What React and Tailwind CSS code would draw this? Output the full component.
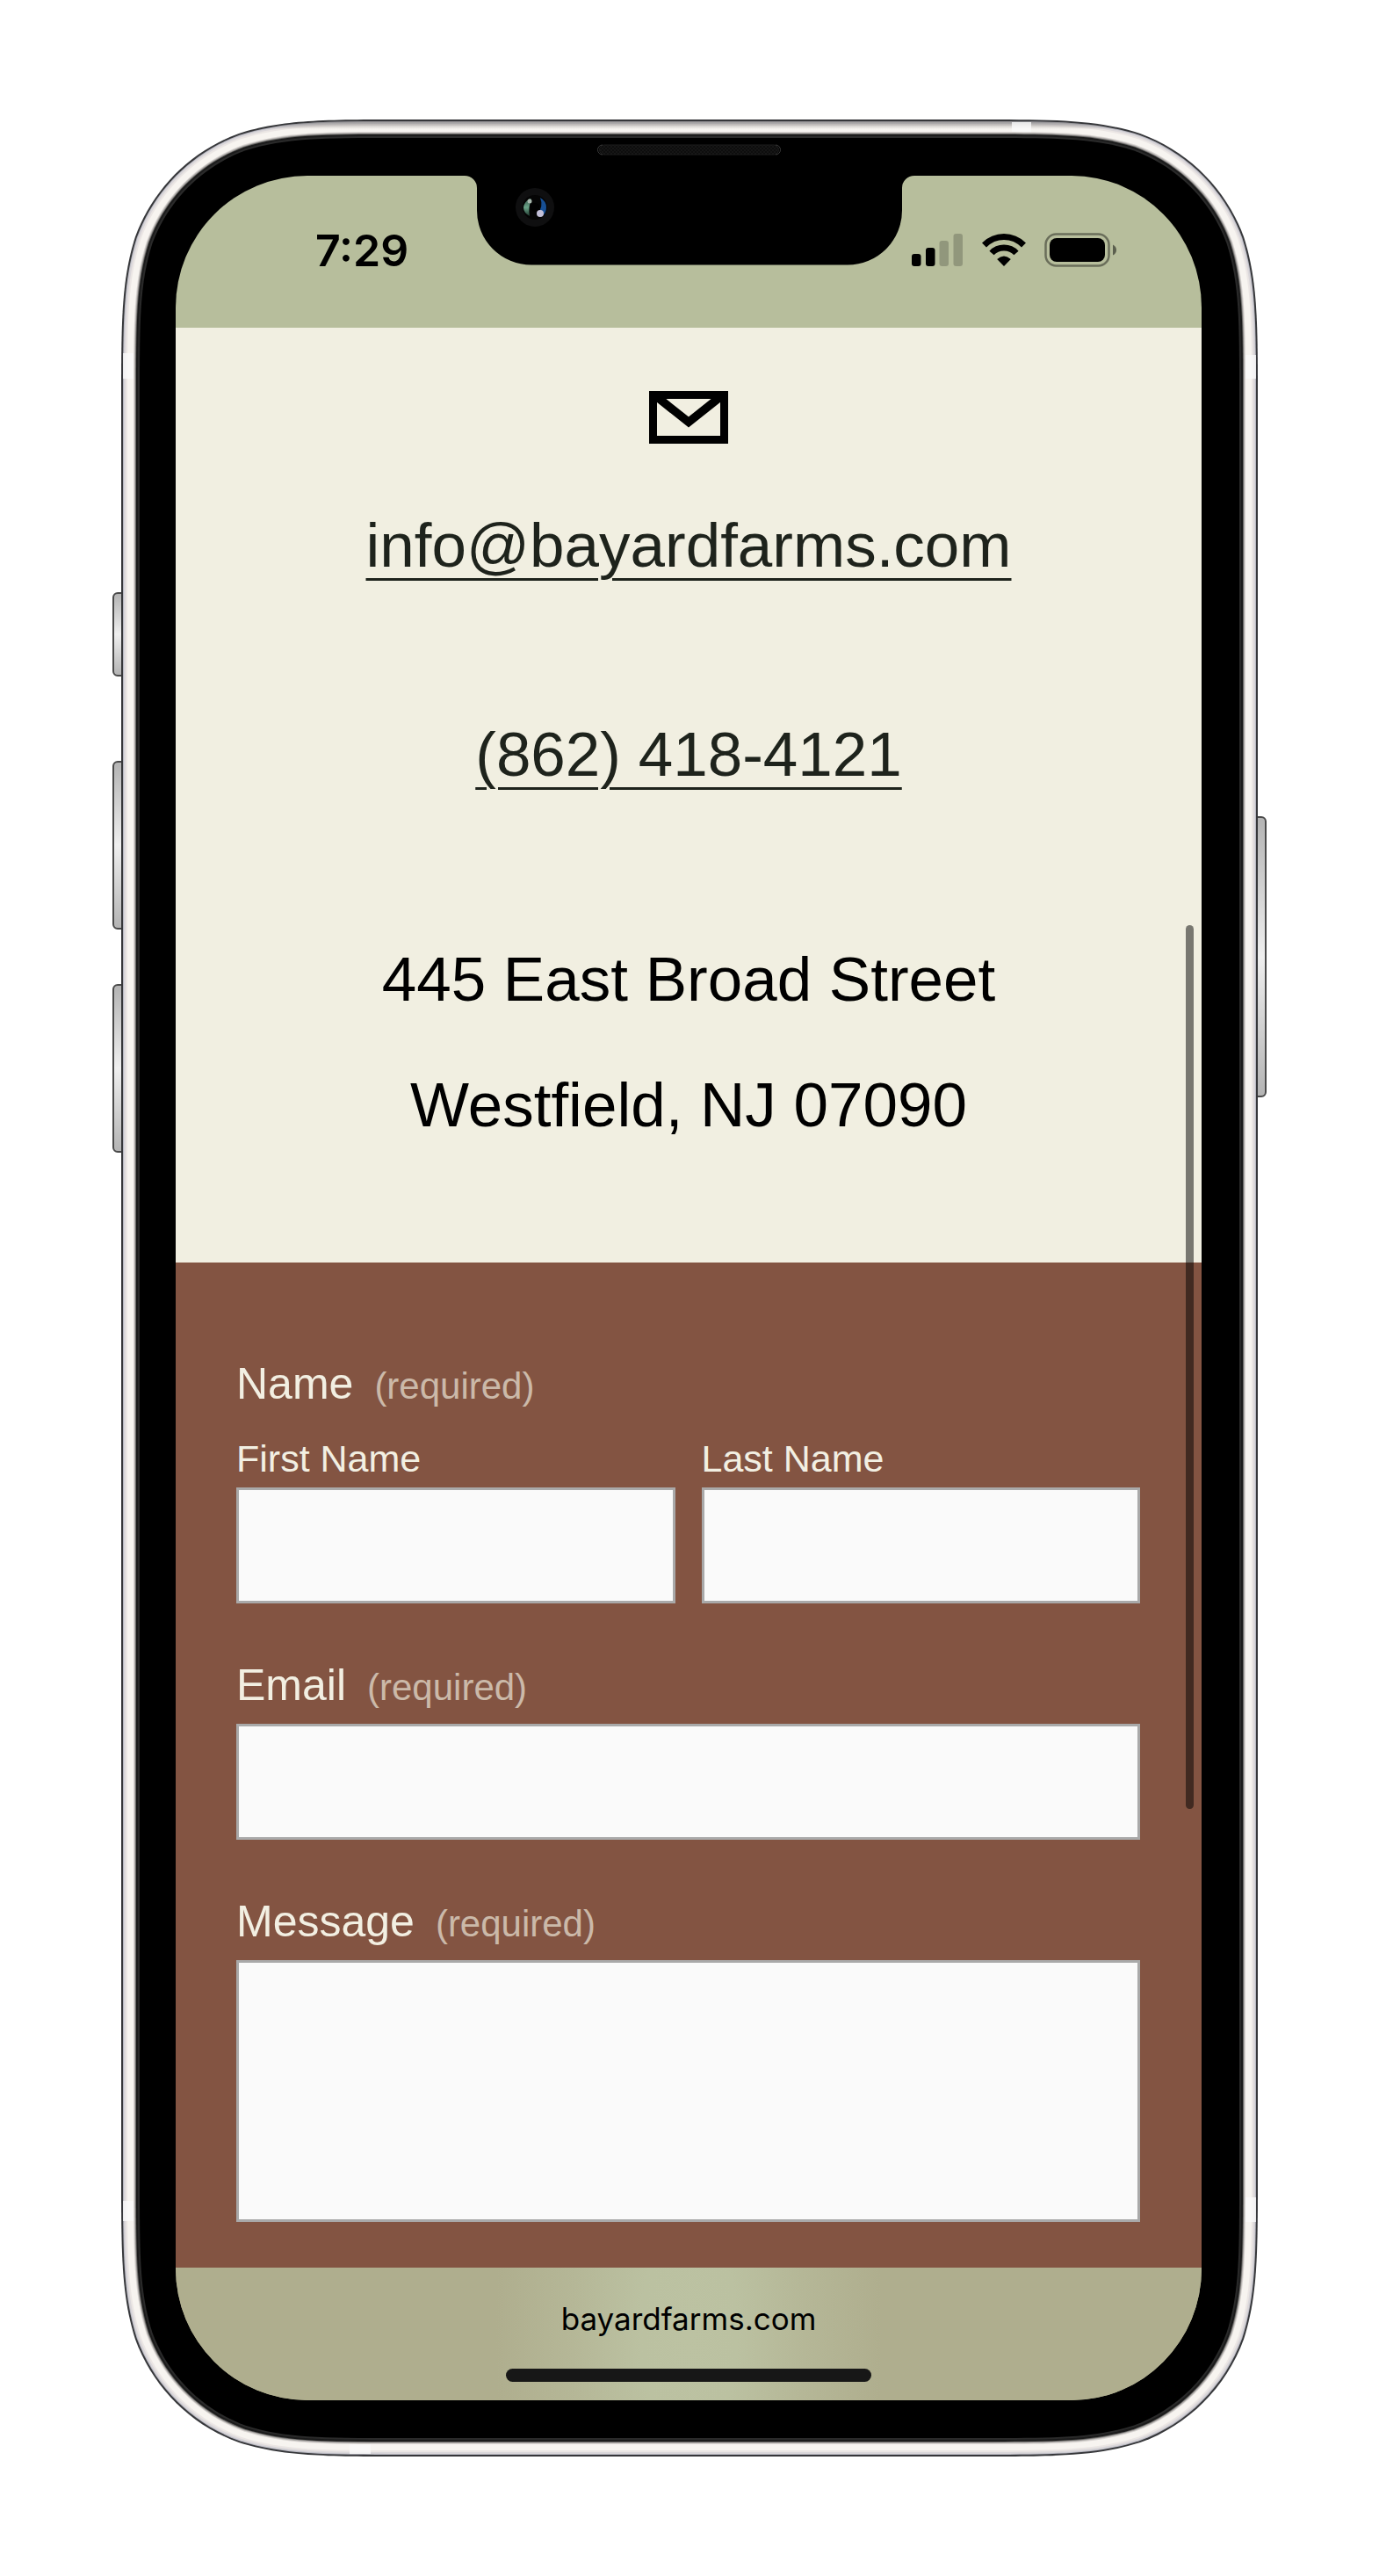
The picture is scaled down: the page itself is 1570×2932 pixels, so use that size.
import React from "react";

/* Continuous-curvature rounded rectangle, as used on phone bodies. */
function bodyPath(x, y, w, h, r) {
  const a = 1.52866483 * r;
  const b = 1.08849296 * r;
  const c = 0.86840694 * r;
  const d = 0.63149379 * r;
  const e = 0.37282383 * r;
  const f = 0.16905956 * r;
  const g = 0.07491139 * r;
  const R = x + w;
  const B = y + h;
  return [
    `M${x + a} ${y}H${R - a}`,
    `C${R - b} ${y} ${R - c} ${y} ${R - d} ${y + g}`,
    `C${R - e} ${y + f} ${R - f} ${y + e} ${R - g} ${y + d}`,
    `C${R} ${y + c} ${R} ${y + b} ${R} ${y + a}`,
    `V${B - a}`,
    `C${R} ${B - b} ${R} ${B - c} ${R - g} ${B - d}`,
    `C${R - f} ${B - e} ${R - e} ${B - f} ${R - d} ${B - g}`,
    `C${R - c} ${B} ${R - b} ${B} ${R - a} ${B}`,
    `H${x + a}`,
    `C${x + b} ${B} ${x + c} ${B} ${x + d} ${B - g}`,
    `C${x + e} ${B - f} ${x + f} ${B - e} ${x + g} ${B - d}`,
    `C${x} ${B - c} ${x} ${B - b} ${x} ${B - a}`,
    `V${y + a}`,
    `C${x} ${y + b} ${x} ${y + c} ${x + g} ${y + d}`,
    `C${x + f} ${y + e} ${x + e} ${y + f} ${x + d} ${y + g}`,
    `C${x + c} ${y} ${x + b} ${y} ${x + a} ${y}Z`,
  ].join("");
}

const W = 1294;
const H = 2661;

const RIM = [
  [0, "#36373a"],
  [2, "#b9b9c2"],
  [3, "#dad7da"],
  [5, "#ebe6e4"],
  [7, "#f7f4f0"],
  [14, "#d8d4d1"],
  [15, "#b0adab"],
  [16, "#6a6967"],
  [17, "#1b1b1b"],
  [19, "#2a2a2a"],
  [21, "#000000"],
];

function SideKey({ className }) {
  return (
    <span
      className={`absolute w-3 border-2 border-[#4a4a4a] bg-linear-to-b from-[#b4b4b4] via-[#efefef] to-[#b4b4b4] ${className}`}
    />
  );
}

function PhoneBody() {
  return (
    <div aria-hidden="true" className="absolute inset-0">
      <SideKey className="top-[538px] -left-[10px] h-24 rounded-l-md" />
      <SideKey className="top-[730px] -left-[10px] h-48 rounded-l-md" />
      <SideKey className="top-[984px] -left-[10px] h-48 rounded-l-md" />
      <SideKey className="top-[793px] -right-[10px] h-80 rounded-r-md" />
      <svg
        className="absolute inset-0 h-full w-full"
        viewBox={`0 0 ${W} ${H}`}
        preserveAspectRatio="none"
      >
        <defs>
          <linearGradient id="topShade" gradientUnits="userSpaceOnUse" x1="0" y1="2" x2="0" y2="11">
            <stop offset="0" stopColor="#6d6b69" stopOpacity="0.6" />
            <stop offset="1" stopColor="#6d6b69" stopOpacity="0" />
          </linearGradient>
        </defs>
        {RIM.slice(0, 5).map(([i, color]) => (
          <path key={i} d={bodyPath(i, i, W - 2 * i, H - 2 * i, 212 - i)} fill={color} />
        ))}
        <path d={bodyPath(2, 2, W - 4, H - 4, 210)} fill="url(#topShade)" />
        <path d="M1014 3h22v14h-22zM260 2644h24v14h-24zM2 266h15v29H2zM1277 268h15v27h-15zM2 2370h15v23H2zM1277 2366h15v28h-15z" fill="#fafafa" opacity="0.8" />
        {RIM.slice(5).map(([i, color]) => (
          <path key={i} d={bodyPath(i, i, W - 2 * i, H - 2 * i, 212 - i)} fill={color} />
        ))}
      </svg>
    </div>
  );
}

function Notch() {
  return (
    <div aria-hidden="true" className="absolute inset-x-0 top-6 flex justify-center">
      <svg className="h-[142px] w-[512px]" viewBox="0 0 512 142">
        <defs>
          <pattern id="mesh" width="4" height="4" patternUnits="userSpaceOnUse">
            <rect width="4" height="4" fill="#0d0d0d" />
            <path d="M0 0h2v2H0zM2 2h2v2H2z" fill="#161616" />
          </pattern>
          <linearGradient id="lensGreen" x1="0" y1="0" x2="0" y2="1">
            <stop offset="0" stopColor="#35544a" />
            <stop offset="0.5" stopColor="#6aa488" />
            <stop offset="1" stopColor="#20382f" />
          </linearGradient>
        </defs>
        <path d="M0 38h512v2a14 14 0 0 0-14 14v25a62 62 0 0 1-62 62.500H76A62 62 0 0 1 14 79V54A14 14 0 0 0 0 40z" fill="#000" />
        <rect x="153.500" y="5" width="204" height="11" rx="5.500" fill="url(#mesh)" stroke="#1c1c1c" />
        <path d="M157 5a5.500 5.500 0 0 0 0 11M354 5a5.500 5.500 0 0 1 0 11" fill="none" stroke="#3a3a3a" />
        <circle cx="80" cy="76" r="22" fill="#0f0f10" />
        <circle cx="80" cy="76" r="14" fill="#050505" />
        <path d="M74 66Q67 71 67 76.500T74 86Q72 76 76 66.500z" fill="url(#lensGreen)" />
        <path d="M86 65q7 4 7 11t-5 10l-5-3q7-8 3-18z" fill="#174f94" />
        <circle cx="80" cy="76" r="5" fill="#020202" />
        <circle cx="74" cy="69" r="2.500" fill="#a9b8ae" />
        <circle cx="86" cy="83" r="4" fill="#c3c0d8" />
      </svg>
    </div>
  );
}

function StatusIcons() {
  return (
    <svg role="img" aria-label="Signal, Wi-Fi and battery" className="h-10 w-[236px]" viewBox="0 0 236 40">
      <rect x="2" y="25" width="10.500" height="14" rx="3" />
      <rect x="18" y="18" width="10.500" height="21" rx="3" />
      <g opacity="0.2">
        <rect x="33.500" y="10" width="10.500" height="29" rx="3" />
        <rect x="49.500" y="2" width="10.500" height="37" rx="3" />
      </g>
      <g fill="none" stroke="#000" strokeWidth="7">
        <path d="M84.500 15Q94 5.500 107 5.500T129.500 15" />
        <path d="M93 24Q98.500 18 107 18T121 24" />
      </g>
      <path d="M107 39l-7.800-8Q103 27.500 107 27.500T114.800 31z" />
      <rect x="154.500" y="2.500" width="72" height="36" rx="12" fill="none" stroke="#000" strokeWidth="2.500" opacity="0.42" />
      <rect x="159" y="7" width="63" height="27" rx="8" />
      <path d="M231 14.500q4 2 4 6t-4 6z" opacity="0.5" />
    </svg>
  );
}

function EnvelopeIcon() {
  return (
    <svg aria-hidden="true" className="h-[60px] w-[90px]" viewBox="0 0 90 60">
      <path d="M4.500 4.500h81v51h-81z" fill="none" stroke="#000" strokeWidth="9" />
      <path d="M8 6L45 35.500L82 6" fill="none" stroke="#000" strokeWidth="9.500" />
    </svg>
  );
}

const FIELD = "block w-full rounded-none border-[3px] border-[#a9a9a9] bg-[#fafafa] px-6 text-[43px] text-black outline-none";

function FieldTitle({ children }) {
  return (
    <span className="flex items-baseline gap-6 text-[50px] leading-[60px] text-[#f2efe2]">
      {children}
      <span className="text-[42px] leading-[42px] text-[#cbb9a9]">(required)</span>
    </span>
  );
}

export default function App() {
  return (
    <div className="flex min-h-screen items-center bg-white px-[138px] py-[135px]">
      <div className="relative w-full px-[62px] py-16">
        <PhoneBody />
        <div className="relative flex flex-col overflow-hidden rounded-[150px] border-r-2 border-black font-['Liberation_Sans',sans-serif]">
          <header className="flex h-[173px] items-start justify-between bg-[#b7be9c] pt-16 pr-[96px] pl-[159px]">
            <time className="font-['Inter',sans-serif] text-[50px] leading-[42px] font-semibold text-black">7:29</time>
            <StatusIcons />
          </header>

          <main>
            <section className="flex flex-col items-center bg-[#f1efe1] pt-[72px] pb-[108px] text-[71px] leading-[143px] whitespace-nowrap text-black">
              <EnvelopeIcon />
              <a
                href="mailto:info@bayardfarms.com"
                className="mt-11 text-[#1e231c] underline decoration-[3px] underline-offset-[13px]"
              >
                info@bayardfarms.com
              </a>
              <a
                href="tel:+18624184121"
                className="mt-[95px] text-[#1e231c] underline decoration-[3px] underline-offset-[13px]"
              >
                (862) 418-4121
              </a>
              <address className="mt-[113px] text-center not-italic">
                445 East Broad Street
                <br />
                Westfield, NJ 07090
              </address>
            </section>

            <form className="flex flex-col gap-[63px] bg-[#835442] pt-[108px] pr-[70px] pb-[52px] pl-[69px]">
              <fieldset>
                <legend>
                  <FieldTitle>Name</FieldTitle>
                </legend>
                <div className="mt-[30px] grid grid-cols-2 gap-[30px] text-[43px] leading-[50px] text-[#f2efe2]">
                  <label className="flex flex-col gap-2">
                    First Name
                    <input type="text" name="firstName" required className={`${FIELD} h-[132px]`} />
                  </label>
                  <label className="flex flex-col gap-2">
                    Last Name
                    <input type="text" name="lastName" required className={`${FIELD} h-[132px]`} />
                  </label>
                </div>
              </fieldset>
              <label className="flex flex-col gap-[14px]">
                <FieldTitle>Email</FieldTitle>
                <input type="email" name="email" required className={`${FIELD} h-[132px]`} />
              </label>
              <label className="flex flex-col gap-[14px]">
                <FieldTitle>Message</FieldTitle>
                <textarea name="message" required className={`${FIELD} h-[298px] resize-none py-4`} />
              </label>
            </form>
          </main>

          <footer className="flex flex-col items-center bg-[#afae8e] bg-[radial-gradient(ellipse_220px_520px_at_center,#bcc2a2_0%,#bbc1a1_25%,#b5b797_60%,#afae8e_100%)] pt-9 pb-[21px]">
            <span className="font-['Inter',sans-serif] text-[35px] leading-[44px] text-black">bayardfarms.com</span>
            <span aria-hidden="true" className="mt-[35px] h-[15px] w-[416px] rounded-full bg-[#171717]" />
          </footer>

          <span aria-hidden="true" className="absolute top-[853px] right-[9px] h-[1006px] w-[9px] rounded-full bg-black/50" />
        </div>
        <Notch />
      </div>
    </div>
  );
}
